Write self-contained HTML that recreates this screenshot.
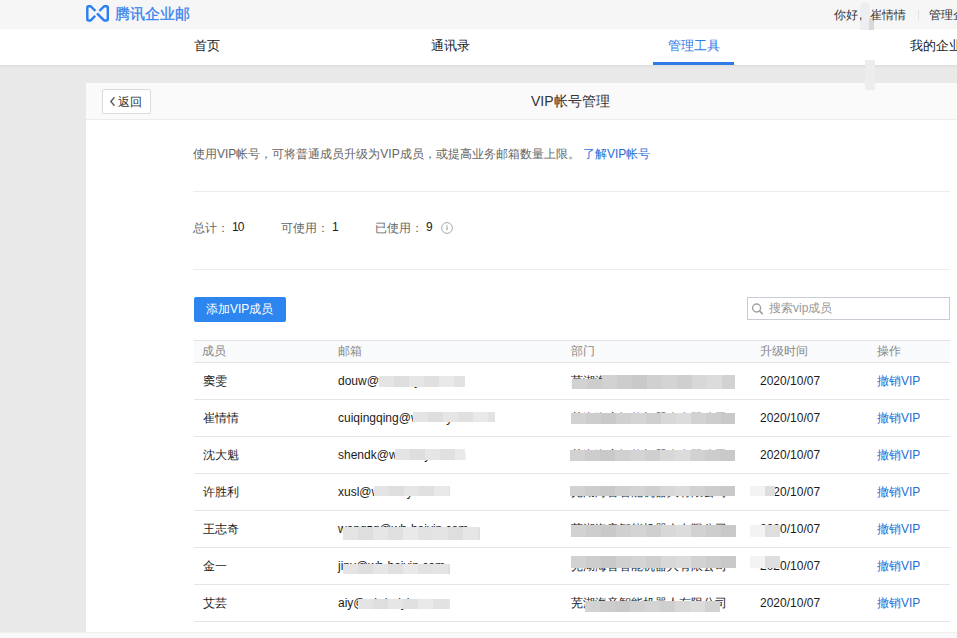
<!DOCTYPE html>
<html><head><meta charset="utf-8">
<style>
*{box-sizing:border-box;margin:0;padding:0}
html,body{width:957px;height:638px;overflow:hidden}
body{position:relative;background:#e9e9e9;font-family:"Liberation Sans",sans-serif;font-size:12px;color:#333}
.abs{position:absolute;white-space:nowrap;line-height:1}
.bl{position:absolute}
#top{position:absolute;left:0;top:0;width:957px;height:29px;background:#f6f6f6}
#nav{position:absolute;left:0;top:29px;width:957px;height:36px;background:#fff;box-shadow:0 1px 3px rgba(0,0,0,.07)}
#card{position:absolute;left:86px;top:83px;width:880px;height:549px;background:#fff}
#chead{position:absolute;left:0;top:0;width:100%;height:37px;background:#fafafa;border-bottom:1px solid #ececec}
#bottom{position:absolute;left:0;top:632px;width:957px;height:6px;background:#f8f8f8;border-top:1px solid #f0f0f0}
.hr{position:absolute;height:1px;background:#ececec}
.th{position:absolute;left:194px;top:340px;width:756px;height:23px;background:#f9fafb;border-top:1px solid #e2e4e8;border-bottom:1px solid #e2e4e8}
.rl{position:absolute;left:194px;width:756px;height:1px;background:#e2e5ea}
.blue{color:#286ed6}
.td{position:absolute;white-space:nowrap;line-height:1;font-size:12px;color:#1c1c1c}
.op{color:#286ed6}
</style></head><body>
<div id="top"></div>
<div id="nav"></div>

<svg class="abs" style="left:84px;top:2px" width="28" height="24" viewBox="0 0 28 24">
<path d="M11.4 9.0 L6.7 4.25 L4.6 4.25 Q3.3 4.25 3.3 5.6 L3.3 17.1 Q3.3 18.45 4.6 18.45 L6.7 18.45 L11.2 13.9" fill="none" stroke="#2b7ff2" stroke-width="2.45" stroke-linecap="butt" stroke-linejoin="round"/>
<path d="M15.4 9.0 L20.1 4.25 L22.5 4.25 Q23.8 4.25 23.8 5.6 L23.8 17.1 Q23.8 18.45 22.5 18.45 L20.1 18.45 L13.0 11.3" fill="none" stroke="#2b7ff2" stroke-width="2.45" stroke-linecap="butt" stroke-linejoin="round"/>
</svg>
<div class="abs" style="left:115px;top:6px;font-size:15px;color:#3683ee;-webkit-text-stroke:0.3px #3683ee">腾讯企业邮</div>
<div class="abs" style="left:860px;top:2px;width:10px;height:28px;background:#eceef1;border-radius:5px 5px 0 0"></div>
<div class="abs" style="left:869px;top:18px;width:5px;height:12px;background:#d9d9d9"></div>
<div class="abs" style="left:834px;top:9px;font-size:12px;color:#333">你好</div>
<div class="abs" style="left:859px;top:9px;font-size:12px;color:#333">,</div>
<div class="abs" style="left:870px;top:9px;font-size:12px;color:#333">崔情情</div>
<div class="abs" style="left:918px;top:10px;width:1px;height:11px;background:#e4e4e4"></div>
<div class="abs" style="left:929px;top:9px;font-size:12px;color:#333">管理企业</div>
<div class="abs" style="left:194px;top:39px;font-size:13px;color:#222">首页</div>
<div class="abs" style="left:431px;top:39px;font-size:13px;color:#222">通讯录</div>
<div class="abs" style="left:668px;top:39px;font-size:13px;color:#2f7be8">管理工具</div>
<div class="abs" style="left:653px;top:62px;width:81px;height:3px;background:#2f7be8"></div>
<div class="abs" style="left:910px;top:39px;font-size:13px;color:#222">我的企业</div>
<div id="card"><div id="chead"></div></div>
<div class="abs" style="left:865px;top:60px;width:10px;height:30px;background:#ededed"></div>
<div class="abs" style="left:102px;top:89px;width:49px;height:25px;background:#fff;border:1px solid #dcdcdc;border-radius:2px"></div>
<svg class="abs" style="left:109px;top:96px" width="8" height="11" viewBox="0 0 8 11"><path d="M5.5 1.3 L1.8 5.5 L5.5 9.7" fill="none" stroke="#555" stroke-width="1.3"/></svg>
<div class="abs" style="left:118px;top:96px;font-size:12px;color:#333">返回</div>
<div class="abs" style="left:531px;top:94px;font-size:14px;color:#333">VIP帐号管理</div>
<div class="abs" style="left:193px;top:148px;font-size:12px;color:#666">使用VIP帐号，可将普通成员升级为VIP成员，或提高业务邮箱数量上限。 <span class="blue">了解VIP帐号</span></div>
<div class="hr" style="left:193px;top:191px;width:757px"></div>
<div class="abs" style="left:193px;top:222px;font-size:12px;color:#666">总计：</div>
<div class="abs" style="left:232px;top:221px;font-size:12px;color:#222;letter-spacing:-1px">10</div>
<div class="abs" style="left:281px;top:222px;font-size:12px;color:#666">可使用：</div>
<div class="abs" style="left:332px;top:221px;font-size:12px;color:#222">1</div>
<div class="abs" style="left:375px;top:222px;font-size:12px;color:#666">已使用：</div>
<div class="abs" style="left:426px;top:221px;font-size:12px;color:#222">9</div>
<svg class="abs" style="left:440px;top:221px" width="14" height="14" viewBox="0 0 14 14"><circle cx="7" cy="7" r="5.4" fill="none" stroke="#aaa" stroke-width="1"/><rect x="6.45" y="4.2" width="1.1" height="1.1" fill="#999"/><rect x="6.45" y="5.9" width="1.1" height="3.2" fill="#999"/></svg>
<div class="hr" style="left:193px;top:269px;width:757px"></div>
<div class="abs" style="left:194px;top:297px;width:92px;height:25px;background:#2d86f0;border-radius:2px"></div>
<div class="abs" style="left:206px;top:303px;font-size:12px;color:#fff">添加VIP成员</div>
<div class="abs" style="left:747px;top:297px;width:203px;height:23px;border:1px solid #c8ccd4;background:#fff"></div>
<div class="abs" style="left:769px;top:302px;font-size:12px;color:#999">搜索vip成员</div>
<svg class="abs" style="left:750px;top:301px" width="14" height="14" viewBox="0 0 14 14"><circle cx="6.6" cy="7" r="4" fill="none" stroke="#a0a0a0" stroke-width="1.4"/><path d="M9.5 9.9 L12.2 12.6" stroke="#a0a0a0" stroke-width="1.7" stroke-linecap="round"/></svg>
<div class="th"></div>
<div class="td" style="left:202px;top:345px;color:#888">成员</div>
<div class="td" style="left:338px;top:345px;color:#888">邮箱</div>
<div class="td" style="left:571px;top:345px;color:#888">部门</div>
<div class="td" style="left:760px;top:345px;color:#888">升级时间</div>
<div class="td" style="left:877px;top:345px;color:#888">操作</div>
<div class="td" style="left:203px;top:375px">窦雯</div>
<div class="td" style="left:338px;top:375px">douw@wh-haiyin.com</div>
<div class="td" style="left:571px;top:375px">芜湖海音智能机器人有限公司</div>
<div class="td" style="left:760px;top:375px">2020/10/07</div>
<div class="td op" style="left:877px;top:375px">撤销VIP</div>
<div class="rl" style="top:399px"></div>
<div class="td" style="left:203px;top:412px">崔情情</div>
<div class="td" style="left:338px;top:412px">cuiqingqing@wh-haiyin.com</div>
<div class="td" style="left:571px;top:412px">芜湖海音智能机器人有限公司</div>
<div class="td" style="left:760px;top:412px">2020/10/07</div>
<div class="td op" style="left:877px;top:412px">撤销VIP</div>
<div class="rl" style="top:436px"></div>
<div class="td" style="left:203px;top:449px">沈大魁</div>
<div class="td" style="left:338px;top:449px">shendk@wh-haiyin.com</div>
<div class="td" style="left:571px;top:449px">芜湖海音智能机器人有限公司</div>
<div class="td" style="left:760px;top:449px">2020/10/07</div>
<div class="td op" style="left:877px;top:449px">撤销VIP</div>
<div class="rl" style="top:473px"></div>
<div class="td" style="left:203px;top:486px">许胜利</div>
<div class="td" style="left:338px;top:486px">xusl@wh-haiyin.com</div>
<div class="td" style="left:571px;top:486px">芜湖海音智能机器人有限公司</div>
<div class="td" style="left:760px;top:486px">2020/10/07</div>
<div class="td op" style="left:877px;top:486px">撤销VIP</div>
<div class="rl" style="top:510px"></div>
<div class="td" style="left:203px;top:523px">王志奇</div>
<div class="td" style="left:338px;top:523px">wangzq@wh-haiyin.com</div>
<div class="td" style="left:571px;top:523px">芜湖海音智能机器人有限公司</div>
<div class="td" style="left:760px;top:523px">2020/10/07</div>
<div class="td op" style="left:877px;top:523px">撤销VIP</div>
<div class="rl" style="top:547px"></div>
<div class="td" style="left:203px;top:560px">金一</div>
<div class="td" style="left:338px;top:560px">jinv@wh-haiyin.com</div>
<div class="td" style="left:571px;top:560px">芜湖海音智能机器人有限公司</div>
<div class="td" style="left:760px;top:560px">2020/10/07</div>
<div class="td op" style="left:877px;top:560px">撤销VIP</div>
<div class="rl" style="top:584px"></div>
<div class="td" style="left:203px;top:597px">艾芸</div>
<div class="td" style="left:338px;top:597px">aiy@wh-haiyin.com</div>
<div class="td" style="left:571px;top:597px">芜湖海音智能机器人有限公司</div>
<div class="td" style="left:760px;top:597px">2020/10/07</div>
<div class="td op" style="left:877px;top:597px">撤销VIP</div>
<div class="rl" style="top:621px"></div>
<div class="bl" style="left:379px;top:376px;width:15px;height:11px;background:#e4e4e4"></div>
<div class="bl" style="left:394px;top:376px;width:15px;height:11px;background:#dedede"></div>
<div class="bl" style="left:409px;top:376px;width:15px;height:11px;background:#e6e6e6"></div>
<div class="bl" style="left:424px;top:376px;width:15px;height:11px;background:#e0e0e0"></div>
<div class="bl" style="left:439px;top:376px;width:15px;height:11px;background:#e9e9e9"></div>
<div class="bl" style="left:454px;top:376px;width:11px;height:11px;background:#e2e2e2"></div>
<div class="bl" style="left:413px;top:412px;width:15px;height:10px;background:#e4e4e4"></div>
<div class="bl" style="left:428px;top:412px;width:15px;height:10px;background:#dedede"></div>
<div class="bl" style="left:443px;top:412px;width:15px;height:10px;background:#e6e6e6"></div>
<div class="bl" style="left:458px;top:412px;width:15px;height:10px;background:#e0e0e0"></div>
<div class="bl" style="left:473px;top:412px;width:15px;height:10px;background:#e9e9e9"></div>
<div class="bl" style="left:488px;top:412px;width:7px;height:10px;background:#e2e2e2"></div>
<div class="bl" style="left:395px;top:449px;width:15px;height:11px;background:#e4e4e4"></div>
<div class="bl" style="left:410px;top:449px;width:15px;height:11px;background:#dedede"></div>
<div class="bl" style="left:425px;top:449px;width:15px;height:11px;background:#e6e6e6"></div>
<div class="bl" style="left:440px;top:449px;width:15px;height:11px;background:#e0e0e0"></div>
<div class="bl" style="left:455px;top:449px;width:10px;height:11px;background:#e9e9e9"></div>
<div class="bl" style="left:374px;top:486px;width:15px;height:10px;background:#e4e4e4"></div>
<div class="bl" style="left:389px;top:486px;width:15px;height:10px;background:#dedede"></div>
<div class="bl" style="left:404px;top:486px;width:15px;height:10px;background:#e6e6e6"></div>
<div class="bl" style="left:419px;top:486px;width:15px;height:10px;background:#e0e0e0"></div>
<div class="bl" style="left:434px;top:486px;width:15px;height:10px;background:#e9e9e9"></div>
<div class="bl" style="left:449px;top:486px;width:1px;height:10px;background:#e2e2e2"></div>
<div class="bl" style="left:343px;top:527px;width:15px;height:13px;background:#e4e4e4"></div>
<div class="bl" style="left:358px;top:527px;width:15px;height:13px;background:#dedede"></div>
<div class="bl" style="left:373px;top:527px;width:15px;height:13px;background:#e6e6e6"></div>
<div class="bl" style="left:388px;top:527px;width:15px;height:13px;background:#e0e0e0"></div>
<div class="bl" style="left:403px;top:527px;width:15px;height:13px;background:#e9e9e9"></div>
<div class="bl" style="left:418px;top:527px;width:15px;height:13px;background:#e2e2e2"></div>
<div class="bl" style="left:433px;top:527px;width:15px;height:13px;background:#e4e4e4"></div>
<div class="bl" style="left:448px;top:527px;width:15px;height:13px;background:#dedede"></div>
<div class="bl" style="left:463px;top:527px;width:15px;height:13px;background:#e6e6e6"></div>
<div class="bl" style="left:478px;top:527px;width:2px;height:13px;background:#e0e0e0"></div>
<div class="bl" style="left:343px;top:564px;width:15px;height:10px;background:#e4e4e4"></div>
<div class="bl" style="left:358px;top:564px;width:15px;height:10px;background:#dedede"></div>
<div class="bl" style="left:373px;top:564px;width:15px;height:10px;background:#e6e6e6"></div>
<div class="bl" style="left:388px;top:564px;width:15px;height:10px;background:#e0e0e0"></div>
<div class="bl" style="left:403px;top:564px;width:15px;height:10px;background:#e9e9e9"></div>
<div class="bl" style="left:418px;top:564px;width:15px;height:10px;background:#e2e2e2"></div>
<div class="bl" style="left:433px;top:564px;width:15px;height:10px;background:#e4e4e4"></div>
<div class="bl" style="left:448px;top:564px;width:2px;height:10px;background:#dedede"></div>
<div class="bl" style="left:358px;top:599px;width:15px;height:10px;background:#e4e4e4"></div>
<div class="bl" style="left:373px;top:599px;width:15px;height:10px;background:#dedede"></div>
<div class="bl" style="left:388px;top:599px;width:15px;height:10px;background:#e6e6e6"></div>
<div class="bl" style="left:403px;top:599px;width:15px;height:10px;background:#e0e0e0"></div>
<div class="bl" style="left:418px;top:599px;width:15px;height:10px;background:#e9e9e9"></div>
<div class="bl" style="left:433px;top:599px;width:15px;height:10px;background:#e2e2e2"></div>
<div class="bl" style="left:448px;top:599px;width:2px;height:10px;background:#e4e4e4"></div>
<div class="bl" style="left:572px;top:379px;width:15px;height:10px;background:#d2d2d2"></div>
<div class="bl" style="left:587px;top:379px;width:15px;height:10px;background:#cdcdcd"></div>
<div class="bl" style="left:602px;top:375px;width:15px;height:14px;background:#d2d2d2"></div>
<div class="bl" style="left:617px;top:375px;width:15px;height:14px;background:#cdcdcd"></div>
<div class="bl" style="left:632px;top:375px;width:15px;height:14px;background:#c9c9c9"></div>
<div class="bl" style="left:647px;top:375px;width:15px;height:14px;background:#d0d0d0"></div>
<div class="bl" style="left:662px;top:375px;width:15px;height:14px;background:#d4d4d4"></div>
<div class="bl" style="left:677px;top:375px;width:15px;height:14px;background:#cfcfcf"></div>
<div class="bl" style="left:692px;top:375px;width:15px;height:14px;background:#d8d8d8"></div>
<div class="bl" style="left:707px;top:375px;width:15px;height:14px;background:#dcdcdc"></div>
<div class="bl" style="left:722px;top:375px;width:13px;height:14px;background:#d2d2d2"></div>
<div class="bl" style="left:571px;top:413px;width:15px;height:11px;background:#d2d2d2"></div>
<div class="bl" style="left:586px;top:413px;width:15px;height:11px;background:#cdcdcd"></div>
<div class="bl" style="left:601px;top:413px;width:15px;height:11px;background:#c9c9c9"></div>
<div class="bl" style="left:616px;top:413px;width:15px;height:11px;background:#d0d0d0"></div>
<div class="bl" style="left:631px;top:413px;width:15px;height:11px;background:#d4d4d4"></div>
<div class="bl" style="left:646px;top:413px;width:15px;height:11px;background:#cfcfcf"></div>
<div class="bl" style="left:661px;top:413px;width:15px;height:11px;background:#d8d8d8"></div>
<div class="bl" style="left:676px;top:413px;width:15px;height:11px;background:#dcdcdc"></div>
<div class="bl" style="left:691px;top:413px;width:15px;height:11px;background:#d2d2d2"></div>
<div class="bl" style="left:706px;top:413px;width:15px;height:11px;background:#cdcdcd"></div>
<div class="bl" style="left:721px;top:413px;width:14px;height:11px;background:#c9c9c9"></div>
<div class="bl" style="left:570px;top:450px;width:15px;height:11px;background:#d2d2d2"></div>
<div class="bl" style="left:585px;top:450px;width:15px;height:11px;background:#cdcdcd"></div>
<div class="bl" style="left:600px;top:450px;width:15px;height:11px;background:#c9c9c9"></div>
<div class="bl" style="left:615px;top:450px;width:15px;height:11px;background:#d0d0d0"></div>
<div class="bl" style="left:630px;top:450px;width:15px;height:11px;background:#d4d4d4"></div>
<div class="bl" style="left:645px;top:450px;width:15px;height:11px;background:#cfcfcf"></div>
<div class="bl" style="left:660px;top:450px;width:15px;height:11px;background:#d8d8d8"></div>
<div class="bl" style="left:675px;top:450px;width:15px;height:11px;background:#dcdcdc"></div>
<div class="bl" style="left:690px;top:450px;width:15px;height:11px;background:#d2d2d2"></div>
<div class="bl" style="left:705px;top:450px;width:15px;height:11px;background:#cdcdcd"></div>
<div class="bl" style="left:720px;top:450px;width:15px;height:11px;background:#c9c9c9"></div>
<div class="bl" style="left:570px;top:486px;width:15px;height:10px;background:#d2d2d2"></div>
<div class="bl" style="left:585px;top:486px;width:15px;height:10px;background:#cdcdcd"></div>
<div class="bl" style="left:600px;top:486px;width:15px;height:10px;background:#c9c9c9"></div>
<div class="bl" style="left:615px;top:486px;width:15px;height:10px;background:#d0d0d0"></div>
<div class="bl" style="left:630px;top:486px;width:15px;height:10px;background:#d4d4d4"></div>
<div class="bl" style="left:645px;top:486px;width:15px;height:10px;background:#cfcfcf"></div>
<div class="bl" style="left:660px;top:486px;width:15px;height:10px;background:#d8d8d8"></div>
<div class="bl" style="left:675px;top:486px;width:15px;height:10px;background:#dcdcdc"></div>
<div class="bl" style="left:690px;top:486px;width:15px;height:10px;background:#d2d2d2"></div>
<div class="bl" style="left:705px;top:486px;width:15px;height:10px;background:#cdcdcd"></div>
<div class="bl" style="left:720px;top:486px;width:15px;height:10px;background:#c9c9c9"></div>
<div class="bl" style="left:571px;top:525px;width:15px;height:12px;background:#d2d2d2"></div>
<div class="bl" style="left:586px;top:525px;width:15px;height:12px;background:#cdcdcd"></div>
<div class="bl" style="left:601px;top:525px;width:15px;height:12px;background:#c9c9c9"></div>
<div class="bl" style="left:616px;top:525px;width:15px;height:12px;background:#d0d0d0"></div>
<div class="bl" style="left:631px;top:525px;width:15px;height:12px;background:#d4d4d4"></div>
<div class="bl" style="left:646px;top:525px;width:15px;height:12px;background:#cfcfcf"></div>
<div class="bl" style="left:661px;top:525px;width:15px;height:12px;background:#d8d8d8"></div>
<div class="bl" style="left:676px;top:525px;width:15px;height:12px;background:#dcdcdc"></div>
<div class="bl" style="left:691px;top:525px;width:15px;height:12px;background:#d2d2d2"></div>
<div class="bl" style="left:706px;top:525px;width:15px;height:12px;background:#cdcdcd"></div>
<div class="bl" style="left:721px;top:525px;width:15px;height:12px;background:#c9c9c9"></div>
<div class="bl" style="left:571px;top:556px;width:15px;height:12px;background:#d2d2d2"></div>
<div class="bl" style="left:586px;top:556px;width:15px;height:12px;background:#cdcdcd"></div>
<div class="bl" style="left:601px;top:556px;width:15px;height:12px;background:#c9c9c9"></div>
<div class="bl" style="left:616px;top:556px;width:15px;height:12px;background:#d0d0d0"></div>
<div class="bl" style="left:631px;top:556px;width:15px;height:12px;background:#d4d4d4"></div>
<div class="bl" style="left:646px;top:556px;width:15px;height:12px;background:#cfcfcf"></div>
<div class="bl" style="left:661px;top:556px;width:15px;height:12px;background:#d8d8d8"></div>
<div class="bl" style="left:676px;top:556px;width:15px;height:12px;background:#dcdcdc"></div>
<div class="bl" style="left:691px;top:556px;width:15px;height:12px;background:#d2d2d2"></div>
<div class="bl" style="left:706px;top:556px;width:15px;height:12px;background:#cdcdcd"></div>
<div class="bl" style="left:721px;top:556px;width:15px;height:12px;background:#c9c9c9"></div>
<div class="bl" style="left:585px;top:601px;width:15px;height:11px;background:#d2d2d2"></div>
<div class="bl" style="left:600px;top:601px;width:15px;height:11px;background:#cdcdcd"></div>
<div class="bl" style="left:615px;top:601px;width:15px;height:11px;background:#c9c9c9"></div>
<div class="bl" style="left:630px;top:601px;width:15px;height:11px;background:#d0d0d0"></div>
<div class="bl" style="left:645px;top:601px;width:15px;height:11px;background:#d4d4d4"></div>
<div class="bl" style="left:660px;top:601px;width:15px;height:11px;background:#cfcfcf"></div>
<div class="bl" style="left:675px;top:601px;width:15px;height:11px;background:#d8d8d8"></div>
<div class="bl" style="left:690px;top:601px;width:15px;height:11px;background:#dcdcdc"></div>
<div class="bl" style="left:705px;top:601px;width:15px;height:11px;background:#d2d2d2"></div>
<div class="bl" style="left:750px;top:486px;width:15px;height:10px;background:#f3f3f3"></div>
<div class="bl" style="left:765px;top:486px;width:10px;height:10px;background:#dedede"></div>
<div class="bl" style="left:750px;top:525px;width:15px;height:12px;background:#f3f3f3"></div>
<div class="bl" style="left:765px;top:525px;width:15px;height:12px;background:#dedede"></div>
<div class="bl" style="left:750px;top:556px;width:15px;height:12px;background:#f3f3f3"></div>
<div class="bl" style="left:765px;top:556px;width:15px;height:12px;background:#dedede"></div>
<div id="bottom"></div>
</body></html>
